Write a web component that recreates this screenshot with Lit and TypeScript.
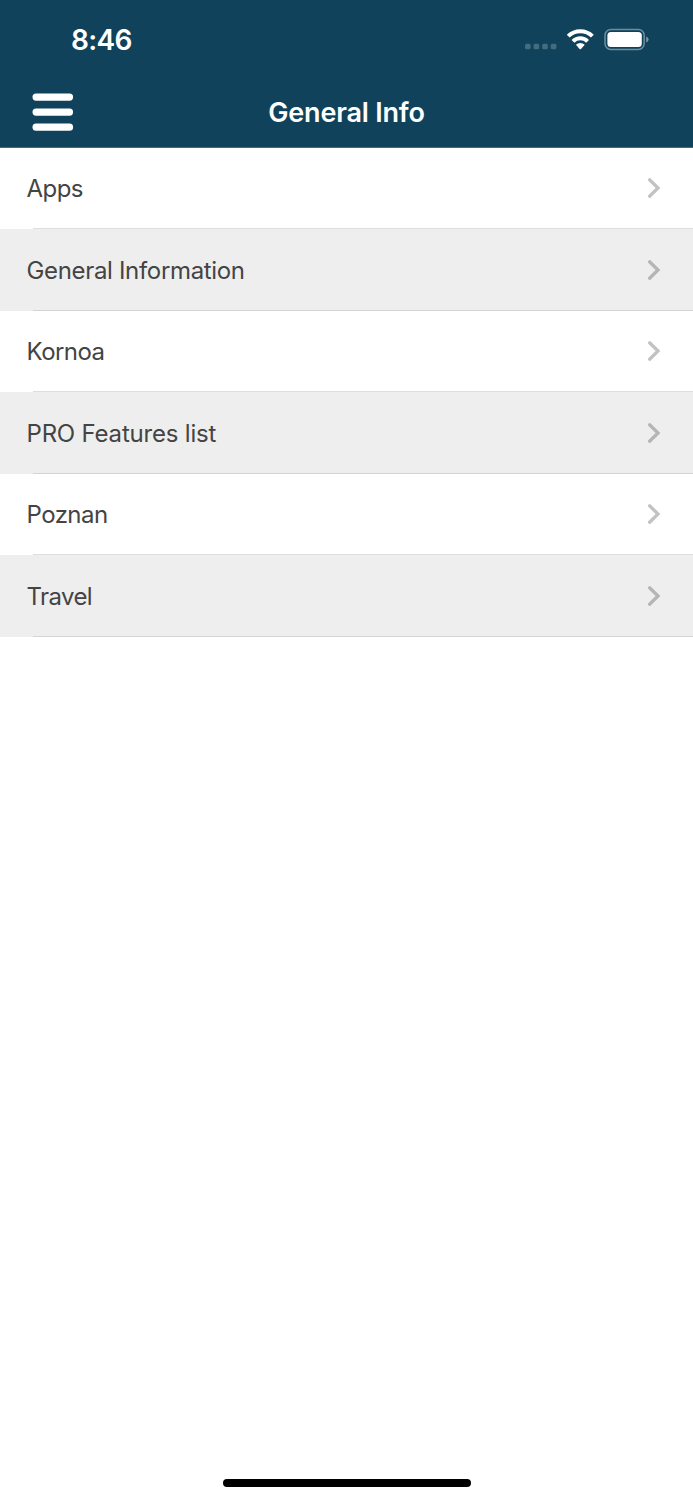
import { LitElement, html, css, svg } from "lit";
import { customElement } from "lit/decorators.js";

interface Item {
  label: string;
  key: string;
}

const ITEMS: Item[] = [
  { label: "Apps", key: "apps" },
  { label: "General Information", key: "general" },
  { label: "Kornoa", key: "kornoa" },
  { label: "PRO Features list", key: "pro" },
  { label: "Poznan", key: "poznan" },
  { label: "Travel", key: "travel" },
];

@customElement("status-bar")
class StatusBar extends LitElement {
  static styles = css`
    :host {
      display: flex;
      justify-content: space-between;
      height: 76px;
      color: #fff;
    }
    .time {
      padding: 23px 0 0 71px;
      font-size: 28px;
      line-height: 34px;
      font-weight: 600;
      letter-spacing: -0.7px;
    }
    .status {
      display: block;
      width: 133px;
      height: 30px;
      padding: 25px 40px 0 0;
    }
  `;

  render() {
    return html`
      <span class="time">8:46</span>
      <svg class="status" viewBox="520 25 133 30" aria-hidden="true">
        <g fill="#fff" fill-opacity=".22">
          ${[525, 533.6, 542.2, 550.8].map(
            (x) => svg`<rect x=${x} y="43.7" width="5.6" height="5.6" rx="1.6" />`
          )}
        </g>
        <g fill="none" stroke="#fff" stroke-width="4">
          <path d="M568.2 36.2a17.2 17.2 0 0 1 24.2 0" />
          <path d="M573 41.3a10.4 10.4 0 0 1 14.6 0" />
        </g>
        <path fill="#fff" d="M575.9 44.8a6.4 6.4 0 0 1 8.8 0l-3.7 4.1q-.7.7-1.4 0Z" />
        <rect x="605" y="29.6" width="39.2" height="19.8" rx="5.8" fill="none" stroke="#fff" stroke-opacity=".4" stroke-width="1.5" />
        <rect x="607.4" y="31.9" width="34.4" height="15" rx="3.5" fill="#fff" />
        <path d="M646.2 36.6q2.4.8 2.4 3t-2.4 3Z" fill="#fff" fill-opacity=".45" />
      </svg>
    `;
  }
}

@customElement("nav-bar")
class NavBar extends LitElement {
  static styles = css`
    :host {
      display: grid;
      grid-template-columns: 1fr auto 1fr;
      height: 71px;
      color: #fff;
    }
    .menu {
      display: block;
      width: 44px;
      height: 40px;
      margin: 16px 0 0 31px;
    }
    .title {
      padding-top: 20px;
      font-size: 27px;
      line-height: 34px;
      font-weight: 570;
      letter-spacing: -0.2px;
      white-space: nowrap;
    }
  `;

  render() {
    return html`
      <svg class="menu" viewBox="31 92 44 40" fill="#fff" aria-hidden="true">
        <rect x="32.5" y="93.4" width="40.6" height="7.3" rx="3.6" />
        <rect x="32.5" y="108.4" width="40.6" height="7.3" rx="3.6" />
        <rect x="32.5" y="123.5" width="40.6" height="7.3" rx="3.6" />
      </svg>
      <div class="title">General Info</div>
    `;
  }
}

@customElement("app-root")
class AppRoot extends LitElement {
  static styles = css`
    :host {
      display: flex;
      flex-direction: column;
      height: 1500px;
      box-sizing: border-box;
      background: #fff;
      font-family: Inter, "Liberation Sans", sans-serif;
    }
    .header {
      background: #10435b;
      border-bottom: 1px solid #486b7b;
      margin-bottom: -0.5px;
    }
    .list {
      flex: 1;
    }
    .row {
      display: flex;
      flex-direction: column;
      height: 81.5px;
      color: #444;
    }
    .row:nth-child(even) {
      background: #eee;
    }
    .content {
      flex: 1;
      display: flex;
      align-items: center;
      justify-content: space-between;
      padding: 3px 32px 0 26.5px;
    }
    .line {
      height: 1px;
      margin-left: 32.5px;
      background: #dedede;
    }
    .row:nth-child(even) .line {
      background: #d4d4d4;
    }
    .label {
      font-size: 24px;
      line-height: 30px;
      white-space: nowrap;
      letter-spacing: -0.55px;
    }
    .general {
      letter-spacing: -0.33px;
    }
    .pro {
      letter-spacing: -0.2px;
    }
    .travel {
      letter-spacing: -0.6px;
    }
    .chevron {
      width: 14px;
      height: 22px;
      margin-top: -2px;
    }
    .home {
      align-self: center;
      width: 248px;
      height: 8px;
      margin-bottom: 13px;
      border-radius: 5px;
      background: #000;
    }
  `;

  render() {
    return html`
      <div class="header">
        <status-bar></status-bar>
        <nav-bar></nav-bar>
      </div>
      <div class="list">
        ${ITEMS.map(
          (item) => html`
            <div class="row">
              <div class="content">
                <span class="label ${item.key}">${item.label}</span>
                <svg class="chevron" viewBox="0 0 14 22" aria-hidden="true">
                  <path d="M2.6 2.8 11 11l-8.4 8.2" fill="none" stroke="#000" stroke-opacity=".24" stroke-width="3.3" stroke-linecap="round" stroke-linejoin="miter" />
                </svg>
              </div>
              <div class="line"></div>
            </div>
          `
        )}
      </div>
      <div class="home"></div>
    `;
  }
}
